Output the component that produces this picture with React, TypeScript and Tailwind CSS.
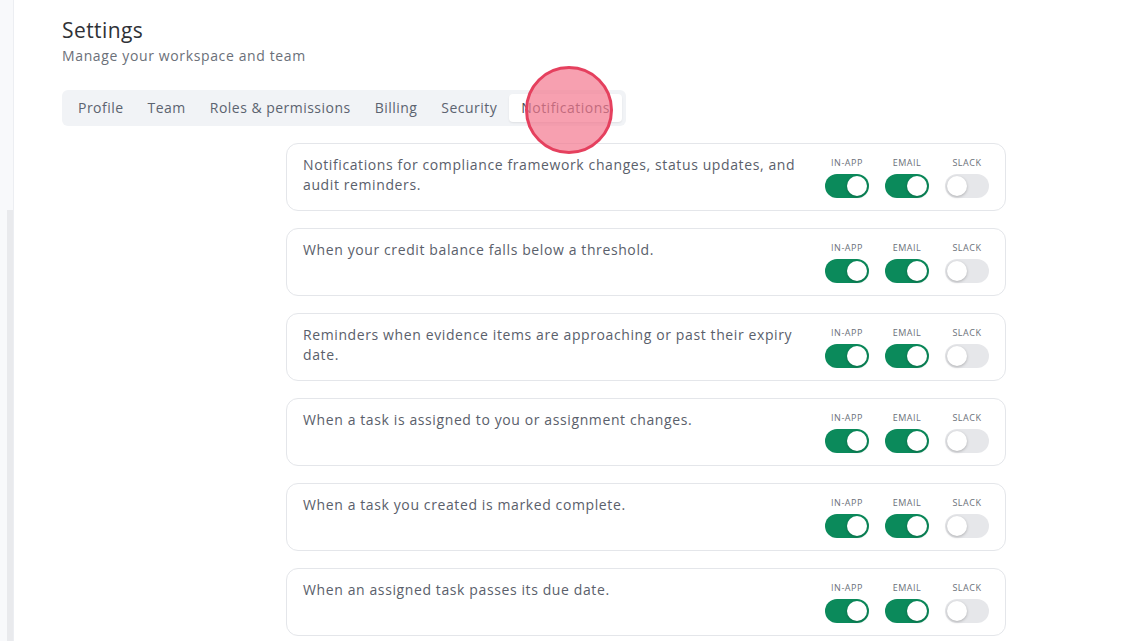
import { useState } from 'react';

type Channel = 'inApp' | 'email' | 'slack';

interface NotificationRow {
  id: string;
  description: string;
  inApp: boolean;
  email: boolean;
  slack: boolean;
}

const tabs = ['Profile', 'Team', 'Roles & permissions', 'Billing', 'Security', 'Notifications'];

const initialRows: NotificationRow[] = [
  {
    id: 'compliance',
    description: 'Notifications for compliance framework changes, status updates, and audit reminders.',
    inApp: true,
    email: true,
    slack: false,
  },
  { id: 'credits', description: 'When your credit balance falls below a threshold.', inApp: true, email: true, slack: false },
  {
    id: 'evidence',
    description: 'Reminders when evidence items are approaching or past their expiry date.',
    inApp: true,
    email: true,
    slack: false,
  },
  { id: 'assigned', description: 'When a task is assigned to you or assignment changes.', inApp: true, email: true, slack: false },
  { id: 'completed', description: 'When a task you created is marked complete.', inApp: true, email: true, slack: false },
  { id: 'overdue', description: 'When an assigned task passes its due date.', inApp: true, email: true, slack: false },
];

const channels: { key: Channel; label: string }[] = [
  { key: 'inApp', label: 'In-app' },
  { key: 'email', label: 'Email' },
  { key: 'slack', label: 'Slack' },
];

function Toggle({ on, onClick }: { on: boolean; onClick: () => void }) {
  return (
    <button
      onClick={onClick}
      className={`flex h-6 w-11 items-center rounded-full p-[2px] transition-colors ${
        on ? 'bg-[#0b8a5b]' : 'bg-[#e6e7ea]'
      }`}
    >
      <span
        className={`h-5 w-5 rounded-full bg-white shadow-[0_1px_3px_rgba(0,0,0,0.25)] transition-transform ${
          on ? 'translate-x-5' : 'translate-x-0'
        }`}
      />
    </button>
  );
}

export default function App() {
  const [rows, setRows] = useState<NotificationRow[]>(initialRows);
  const [activeTab, setActiveTab] = useState('Notifications');

  const flip = (id: string, key: Channel) => {
    setRows((prev) => prev.map((r) => (r.id === id ? { ...r, [key]: !r[key] } : r)));
  };

  return (
    <div
      className="flex min-h-screen bg-white tracking-[0.038em] text-[#4b5260]"
      style={{ fontFamily: '"Open Sans", "Noto Sans", sans-serif' }}
    >
      {/* collapsed side rail with its scroll thumb */}
      <div className="relative w-[14px] shrink-0 border-r border-[#eceef2] bg-[#f8f9fb]">
        <div className="absolute left-[7px] top-[210px] bottom-0 w-[6px] bg-[#e9eaed]" />
      </div>

      <main className="relative flex-1 pl-12 pt-4">
        <h1 className="text-[21px] leading-7 font-medium tracking-[0.02em] text-[#2f3237]">Settings</h1>
        <p className="mt-0.5 text-sm leading-5 tracking-[0.045em] text-[#6b7079]">Manage your workspace and team</p>

        <div className="relative mt-6 inline-flex h-9 items-center rounded-md bg-[#f1f3f6] p-1">
          {tabs.map((tab) => (
            <button
              key={tab}
              onClick={() => setActiveTab(tab)}
              className={`h-7 rounded px-3 text-sm font-medium tracking-[0.034em] ${
                activeTab === tab ? 'bg-white text-[#4a4d55] shadow-[0_1px_2px_rgba(0,0,0,0.08)]' : 'text-[#5c6370]'
              }`}
            >
              {tab}
            </button>
          ))}
          {/* click marker */}
          <div className="pointer-events-none absolute left-[463px] top-[-24px] h-[88px] w-[88px] rounded-full border-[3px] border-[#e5405e] bg-[#f4788f]/70" />
        </div>

        <div className="ml-[224px] mt-[17px] flex w-[720px] flex-col gap-[17px]">
          {rows.map((row) => (
            <div
              key={row.id}
              className="flex min-h-[68px] items-start justify-between rounded-xl border border-[#e4e6ea] bg-white pl-4 pr-4"
            >
              <p className="max-w-[500px] pt-[11px] text-sm leading-5 text-[#5a606b]">{row.description}</p>
              <div className="flex gap-4 pt-[13px] pb-3">
                {channels.map((c) => (
                  <div key={c.key} className="flex w-11 flex-col items-center gap-[5px]">
                    <span className="text-[9px] leading-3 uppercase tracking-[0.06em] text-[#6b7079]">{c.label}</span>
                    <Toggle on={row[c.key]} onClick={() => flip(row.id, c.key)} />
                  </div>
                ))}
              </div>
            </div>
          ))}
        </div>
      </main>
    </div>
  );
}
